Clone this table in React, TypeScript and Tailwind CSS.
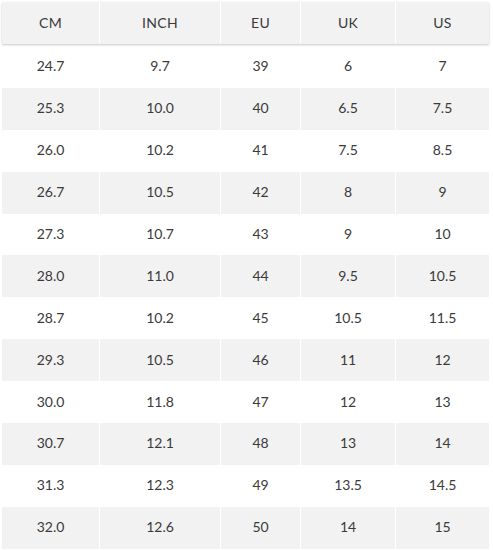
import React from "react";

const rows: string[][] = [
  ["24.7", "9.7", "39", "6", "7"],
  ["25.3", "10.0", "40", "6.5", "7.5"],
  ["26.0", "10.2", "41", "7.5", "8.5"],
  ["26.7", "10.5", "42", "8", "9"],
  ["27.3", "10.7", "43", "9", "10"],
  ["28.0", "11.0", "44", "9.5", "10.5"],
  ["28.7", "10.2", "45", "10.5", "11.5"],
  ["29.3", "10.5", "46", "11", "12"],
  ["30.0", "11.8", "47", "12", "13"],
  ["30.7", "12.1", "48", "13", "14"],
  ["31.3", "12.3", "49", "13.5", "14.5"],
  ["32.0", "12.6", "50", "14", "15"],
];

const head = ["CM", "INCH", "EU", "UK", "US"];

export default function App() {
  return (
    <div
      className="w-[493px] h-[550px] bg-white pt-[2px] pl-[2px] text-[#3a3a3a] text-[14px]"
      style={{ fontFamily: "Lato, 'Noto Sans', sans-serif" }}
    >
      <div className="w-[487px] flex flex-col">
        <div className="grid grid-cols-[97px_120px_79px_94px_93px] gap-x-[1px] h-[42px] shadow-[0_1px_2px_rgba(0,0,0,0.22)] relative z-10">
          {head.map((h) => (
            <div key={h} className="bg-[#f2f2f2] flex items-center justify-center tracking-[0.3px] pb-[1px]">
              {h}
            </div>
          ))}
        </div>
        <div className="mt-[2px]">
          {rows.map((r, i) => (
            <div
              key={i}
              className="grid grid-cols-[97px_120px_79px_94px_93px] gap-x-[1px] h-[41.9px]"
            >
              {r.map((c, j) => (
                <div
                  key={j}
                  className={`${i % 2 === 1 ? "bg-[#f2f2f2]" : "bg-white"} flex items-center justify-center pb-[2px]`}
                >
                  {c}
                </div>
              ))}
            </div>
          ))}
        </div>
      </div>
    </div>
  );
}
